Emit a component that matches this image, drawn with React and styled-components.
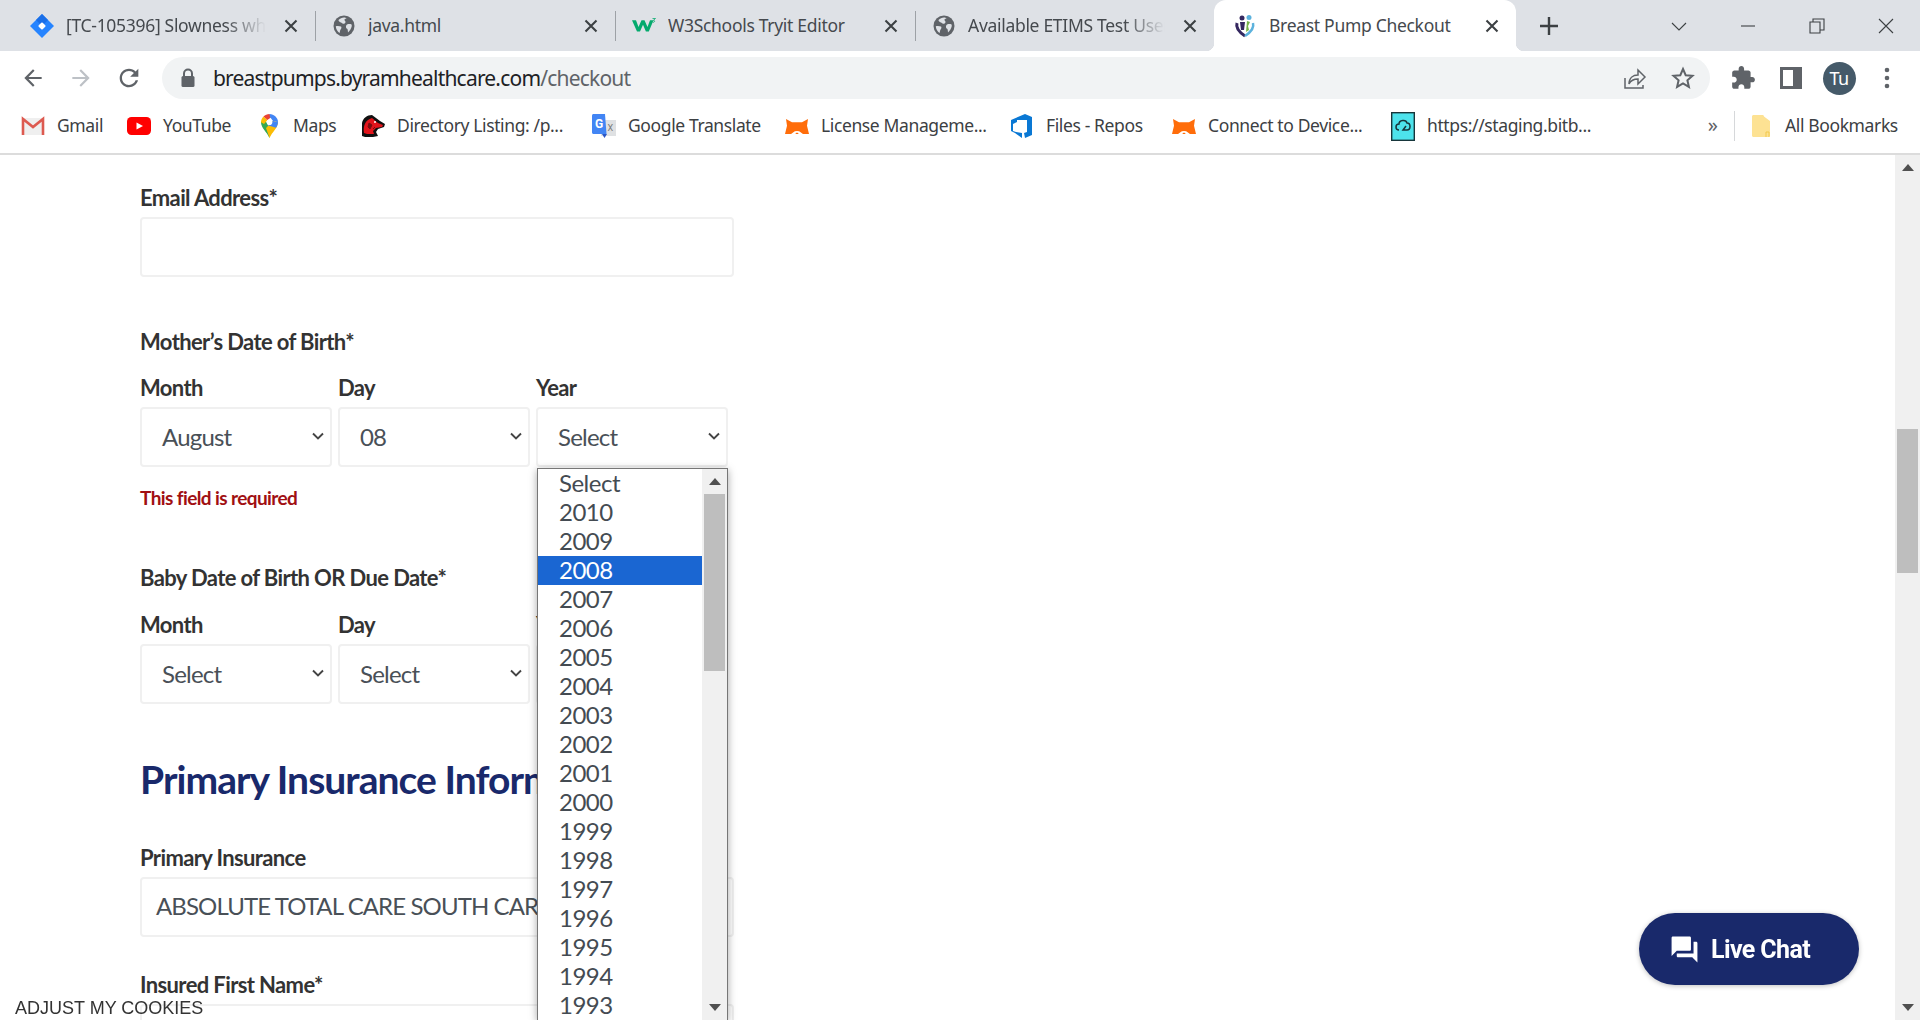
import { Fragment } from "react";
import styled, { createGlobalStyle } from "styled-components";

const GlobalStyle = createGlobalStyle`
  html, body {
    margin: 0;
    padding: 0;
    height: 100%;
    overflow: hidden;
    background: #fff;
  }
  * {
    box-sizing: border-box;
  }
`;

const Page = styled.div`
  width: 1920px;
  height: 1020px;
  display: flex;
  flex-direction: column;
  overflow: hidden;
  position: relative;
  font-family: "Lato", "Noto Sans", sans-serif;
`;

/* ---------- browser chrome ---------- */

const TabStrip = styled.div`
  height: 51px;
  flex: none;
  display: flex;
  align-items: center;
  padding-left: 14px;
  background: #dee1e6;
`;

const Tab = styled.div`
  width: ${(p) => p.$w}px;
  height: ${(p) => (p.$active ? "51px" : "30px")};
  flex: none;
  display: flex;
  align-items: center;
  gap: 12px;
  padding: 0 15px 0 ${(p) => p.$pad || 16}px;
  position: relative;
  background: ${(p) => (p.$active ? "#fff" : "transparent")};
  border-radius: ${(p) => (p.$active ? "12px 12px 0 0" : "0")};
  ${(p) =>
    p.$active &&
    `
    &::before, &::after {
      content: "";
      position: absolute;
      bottom: 0;
      width: 8px;
      height: 8px;
    }
    &::before {
      left: -8px;
      background: radial-gradient(circle at 0 0, #dee1e6 8px, #fff 8.5px);
    }
    &::after {
      right: -8px;
      background: radial-gradient(circle at 100% 0, #dee1e6 8px, #fff 8.5px);
    }
  `}
`;

const TabIcon = styled.span`
  width: 24px;
  height: 24px;
  flex: none;
  display: flex;
  align-items: center;
  justify-content: center;
`;

const TabTitle = styled.span`
  flex: 1;
  min-width: 0;
  overflow: hidden;
  white-space: nowrap;
  padding-bottom: 2px;
  font: 17.5px "Noto Sans", sans-serif;
  letter-spacing: -0.3px;
  color: #45494e;
  ${(p) =>
    p.$fade &&
    `mask-image: linear-gradient(to right, #000 78%, transparent 98%);`}
`;

const TabSep = styled.span`
  width: 1px;
  height: 30px;
  flex: none;
  background: #9da1a6;
`;

const NewTab = styled.span`
  width: 24px;
  height: 24px;
  margin-left: 21px;
  display: flex;
`;

const WindowControls = styled.div`
  margin-left: auto;
  display: flex;
`;

const WindowButton = styled.span`
  width: 69px;
  height: 51px;
  display: flex;
  align-items: center;
  justify-content: center;
`;

const Toolbar = styled.div`
  height: 52px;
  flex: none;
  display: flex;
  align-items: flex-start;
  padding: 6px 9px 4px;
  background: #fff;
`;

const ToolButton = styled.span`
  width: 48px;
  height: 42px;
  flex: none;
  display: flex;
  align-items: center;
  justify-content: center;
`;

const AddressBar = styled.div`
  flex: 1;
  height: 42px;
  margin: 0 9px;
  padding: 0 3px 0 18px;
  display: flex;
  align-items: center;
  border-radius: 21px;
  background: #f1f3f4;
`;

const Url = styled.span`
  margin-left: 17px;
  flex: 1;
  font: 21px "Noto Sans", sans-serif;
  letter-spacing: -0.8px;
  color: #202124;
  span {
    color: #5f6368;
  }
`;

const BookmarkBar = styled.div`
  height: 52px;
  flex: none;
  display: flex;
  align-items: center;
  padding: 0 22px 4px 21px;
  background: #fff;
  border-bottom: 2px solid #dcdcdc;
`;

const Bookmark = styled.div`
  display: flex;
  align-items: center;
  gap: 12px;
  margin-right: 25px;
`;

const BookmarkIcon = styled.span`
  width: 24px;
  height: 24px;
  flex: none;
  display: flex;
  align-items: center;
  justify-content: center;
`;

const BookmarkLabel = styled.span`
  width: ${(p) => p.$w}px;
  margin-left: ${(p) => p.$left || 0}px;
  padding-bottom: 2px;
  white-space: nowrap;
  font: 17.5px "Noto Sans", sans-serif;
  letter-spacing: -0.38px;
  color: #3c4043;
`;

const BookmarkEnd = styled.div`
  margin-left: auto;
  display: flex;
  align-items: center;
`;

const More = styled.span`
  padding-bottom: 4px;
  font: 20px "Noto Sans", sans-serif;
  color: #5f6368;
  margin-right: 16px;
`;

const BarSep = styled.span`
  width: 1px;
  height: 30px;
  background: #d6d8da;
  margin-right: 17px;
`;

/* ---------- page body ---------- */

const Body = styled.div`
  flex: 1;
  min-height: 0;
  display: flex;
`;

const Main = styled.main`
  flex: 1;
  min-width: 0;
  overflow: hidden;
  padding: 31px 0 0 140px;
`;

const Form = styled.div`
  width: 594px;
`;

const Label = styled.div`
  height: 24px;
  line-height: 23px;
  font-size: 22px;
  font-weight: 700;
  letter-spacing: -0.62px;
  white-space: nowrap;
  color: #333;
  margin-top: ${(p) => p.$top || 0}px;
  margin-bottom: 7px;
`;

const Input = styled.div`
  width: 594px;
  height: 60px;
  padding: 0 0 4px 14px;
  display: flex;
  align-items: center;
  background: #fff;
  border: 2px solid #f0f0f0;
  border-radius: 4px;
  font-size: 24px;
  letter-spacing: -0.9px;
  white-space: nowrap;
  overflow: hidden;
  color: #495057;
`;

const DateRow = styled.div`
  width: 588px;
  margin-top: ${(p) => p.$top}px;
  display: grid;
  grid-template-columns: repeat(3, 1fr);
  gap: 6px;
`;

const DateCol = styled.div`
  position: relative;
  min-width: 0;
`;

const SelectBox = styled.div`
  height: 60px;
  padding: 0 6px 2px 20px;
  display: flex;
  align-items: center;
  justify-content: space-between;
  background: #fff;
  border: 2px solid #f0f0f0;
  border-radius: 4px;
  font-size: 24px;
  letter-spacing: -0.8px;
  color: #495057;
`;

const ErrorText = styled.div`
  height: 24px;
  line-height: 22px;
  margin-top: 20px;
  font-size: 19px;
  font-weight: 700;
  letter-spacing: -0.6px;
  color: #a10f12;
`;

const SectionTitle = styled.h2`
  height: 48px;
  line-height: 46px;
  margin: 52px 0 42px;
  font-size: 39px;
  font-weight: 700;
  letter-spacing: -0.95px;
  white-space: nowrap;
  color: #19296b;
`;

/* the open year list, drawn over the form */
const YearPopup = styled.div`
  position: absolute;
  top: 92px;
  left: 1px;
  width: 191px;
  height: 552px;
  z-index: 5;
  display: flex;
  background: #fff;
  border: 1px solid #767676;
  border-bottom: none;
  box-shadow: 0 2px 8px rgba(0, 0, 0, 0.35);
`;

const YearList = styled.div`
  flex: 1;
  min-width: 0;
`;

const YearOption = styled.div`
  height: 29px;
  line-height: 27px;
  padding-left: 21px;
  font-size: 24px;
  letter-spacing: -0.5px;
  color: ${(p) => (p.$selected ? "#fff" : "#444b52")};
  background: ${(p) => (p.$selected ? "#1a66d2" : "transparent")};
`;

const Scrollbar = styled.div`
  width: ${(p) => p.$w}px;
  flex: none;
  display: flex;
  flex-direction: column;
  align-items: center;
  background: #f0f0f0;
`;

const ScrollArrow = styled.span`
  height: 25px;
  flex: none;
  display: flex;
  align-items: center;
  justify-content: center;
  margin-top: ${(p) => (p.$down ? "auto" : "0")};
`;

const ScrollThumb = styled.div`
  width: 21px;
  height: ${(p) => p.$h}px;
  margin-top: ${(p) => p.$top}px;
  background: #bebebe;
`;

const CookieLink = styled.div`
  position: fixed;
  left: 15px;
  bottom: 1px;
  font: 18px "Liberation Sans", Arial, sans-serif;
  line-height: 22px;
  color: #333;
`;

const ChatButton = styled.div`
  position: fixed;
  right: 61px;
  bottom: 35px;
  width: 220px;
  height: 72px;
  padding-left: 30px;
  display: flex;
  align-items: center;
  gap: 11px;
  border-radius: 36px;
  background: #19296b;
  box-shadow: 0 1px 5px rgba(0, 0, 0, 0.25);
  color: #fff;
  font: 700 25px "Roboto", sans-serif;
  letter-spacing: -0.6px;
`;

/* ---------- icons ---------- */

const Chevron = () => (
  <svg width="12" height="8" viewBox="0 0 12 8" fill="none">
    <path d="M1 1.500l5 5 5-5" stroke="#444" strokeWidth="1.900" />
  </svg>
);

const CloseX = () => (
  <svg width="18" height="18" viewBox="0 0 18 18" fill="none">
    <path d="M3.500 3.500l11 11M14.500 3.500l-11 11" stroke="#3c4043" strokeWidth="2.100" />
  </svg>
);

const Globe = () => (
  <svg width="22" height="22" viewBox="0 0 22 22">
    <circle cx="11" cy="11" r="10.500" fill="#5f6368" />
    <path
      d="M11 2.500c-2 .2-4 1-5.500 2.600.2 1.500 1 2 2.400 2.400 1 .3 1.300 1.200 2.300 1.300 1.200.1 2.300-.8 2.300-1.900 0-.8-.9-1-1-1.800-.1-.9.4-1.500 2-1.700C13 2.900 12 2.500 11 2.500zM8 11.500c-1.500-.5-3.400-.8-5.200-.2.1 2.700 1.500 5.200 3.800 6.700.6-1.500.2-2.800 1.200-3.700.8-.8.800-2.400.2-2.800zM18.600 9.500c-1.600-.6-4.100-.7-5.100.5-1 1.300-.6 3.200.6 3.800.8.400.7 2.400.9 3.600 2-1.600 3.300-4 3.800-6.300-.1-.6-.1-1.100-.2-1.600z"
      fill="#dee1e6"
    />
  </svg>
);

const JiraIcon = () => (
  <svg width="24" height="24" viewBox="0 0 24 24">
    <path d="M12 0l12 12-12 12L0 12z" fill="#2684ff" />
    <path d="M12 0l6 6-6 6-6-6z" fill="#1a6fe8" />
    <rect x="9.200" y="9.200" width="5.600" height="5.600" rx="1" transform="rotate(45 12 12)" fill="#fff" />
  </svg>
);

const W3Icon = () => (
  <svg width="24" height="15" viewBox="0 0 24 20" preserveAspectRatio="none">
    <path d="M0 3h4l2.500 9L9.500 3h3l3 9L18 3h3.500l-4.700 15h-2.900L11 9l-3 9H5z" fill="#04aa6d" />
    <path d="M20.500 .5h3L21.500 3c1.500.3 1.500 2.800-.7 2.800" fill="none" stroke="#04aa6d" strokeWidth="1" />
  </svg>
);

const PumpIcon = () => (
  <svg width="24" height="24" viewBox="0 0 24 24">
    <path d="M12 22C6 18 2.500 14 4 9" fill="none" stroke="#34275f" strokeWidth="3" />
    <path d="M12 22c6-4 9.500-8 8-13" fill="none" stroke="#5cb2dd" strokeWidth="2.500" />
    <circle cx="9" cy="4" r="2.500" fill="#34275f" />
    <circle cx="16" cy="3.500" r="2.500" fill="#5cb2dd" />
    <path d="M7 8h5l-1 8H8z" fill="#34275f" />
    <path d="M14 7l3 1-2 4 1 4-3 2z" fill="#77b44a" />
  </svg>
);

const GmailIcon = () => (
  <svg width="24" height="20" viewBox="0 0 24 20">
    <rect x="1" y="2" width="22" height="17" fill="#efefef" />
    <path d="M2 19V3l10 8 10-8v16" fill="none" stroke="#dd5a50" strokeWidth="2.600" />
  </svg>
);

const YouTubeIcon = () => (
  <svg width="24" height="18" viewBox="0 0 24 18">
    <rect width="24" height="18" rx="4.500" fill="#f00" />
    <path d="M9.500 5.500L16 9l-6.500 3.500z" fill="#fff" />
  </svg>
);

const MapsIcon = () => (
  <svg width="17" height="24" viewBox="0 0 17 24">
    <path d="M8.500 24C6 18 0 14 0 8.200L3 4l5.500 9.500z" fill="#34a853" />
    <path d="M0 8.200C0 6 1 4 2.500 2.500l4 3.500L3 10z" fill="#fbbc04" />
    <path d="M2.500 2.500C4 1 6.200 0 8.500 0l2 3-4 3z" fill="#ea4335" />
    <path d="M8.500 0C13 0 17 3.700 17 8.200L12 7 9 3z" fill="#4285f4" />
    <path d="M17 8.200c0 5.800-6 9.800-8.500 15.800L5 14l7-7z" fill="#fbbc04" />
    <path d="M17 8.200c0 2-.8 3.800-2 5.500L6 11l6-4z" fill="#4285f4" />
    <circle cx="8.500" cy="8.200" r="2.800" fill="#fff" />
  </svg>
);

const MascotIcon = () => (
  <svg width="24" height="24" viewBox="0 0 24 24">
    <path d="M1 22V9c1-5 5-8 10-8l4 3 4 3 5 3-1 3-6 2-2 3 2 4-5 1H4z" fill="#111" />
    <path d="M3 19c-1-7 1-13 8-15l6 5 5 2-1 2-6 1-3 3 1 3H6z" fill="#e2141b" />
    <path d="M8 9l3 2-2 4-2-2zM12 15l2-2" fill="#7a0c10" stroke="#7a0c10" />
    <circle cx="14" cy="8" r="1" fill="#fff" />
  </svg>
);

const TranslateIcon = () => (
  <svg width="24" height="24" viewBox="0 0 24 24">
    <rect x="9" y="6" width="15" height="16" fill="#dfe1e3" />
    <path d="M0 1.500C0 .7.700 0 1.500 0H13l1.500 20H1.500C.7 20 0 19.300 0 18.500z" fill="#4285f4" />
    <path d="M10 20h5l-2.500 4z" fill="#2a56c6" />
    <text x="3" y="14" fontFamily="Roboto, sans-serif" fontSize="12" fontWeight="700" fill="#fff">G</text>
    <text x="15.500" y="17" fontFamily="Roboto, sans-serif" fontSize="9" fill="#777">X</text>
  </svg>
);

const FoxIcon = () => (
  <svg width="24" height="15" viewBox="0 0 24 18" preserveAspectRatio="none">
    <path d="M1 0l6 4h10l6-4-1 8 2 10h-6l-3.500-3h-5L6 18H0l2-10z" fill="#ff6d0a" />
    <path d="M8.500 18c0-5 7-5 7 0z" fill="#fff" />
    <path d="M10.500 18c0-2 3-2 3 0z" fill="#ff6d0a" />
  </svg>
);

const ReposIcon = () => (
  <svg width="24" height="24" viewBox="0 0 24 24">
    <path d="M15 0l7 3v18l-7 3-1-5 3-1V6H7v2L3 10v7l3 1 6 1v5l-7-5-4-2V6z" fill="#0a78d4" />
  </svg>
);

const CloudIcon = () => (
  <svg width="24" height="29" viewBox="0 0 24 29">
    <rect x=".7" y=".7" width="22.600" height="27.600" fill="#4de3ec" stroke="#17363b" strokeWidth="1.400" />
    <path d="M8 18c-4 0-4-6 0-6 0-4 7-5 8-1 4 0 4 7 0 7h-4l3-4" fill="none" stroke="#17363b" strokeWidth="1.500" />
  </svg>
);

const FolderIcon = () => (
  <svg width="18" height="22" viewBox="0 0 18 22">
    <path d="M0 1.500C0 .7.700 0 1.500 0h9c.8 0 1.500.7 1.500 1.500L18 6v14.500c0 .8-.7 1.500-1.500 1.500h-15C.7 22 0 21.300 0 20.500z" fill="#fde293" />
    <path d="M14 22v-5h3v5" fill="none" stroke="#f2c94c" strokeWidth="1" />
  </svg>
);

const MaterialIcon = ({ d, size = 24, color = "#5f6368" }) => (
  <svg width={size} height={size} viewBox="0 0 24 24">
    <path d={d} fill={color} />
  </svg>
);

const BACK = "M20 11H7.830l5.590-5.590L12 4l-8 8 8 8 1.410-1.410L7.830 13H20v-2z";
const FORWARD = "M4 11h12.170l-5.590-5.590L12 4l8 8-8 8-1.410-1.410L16.170 13H4v-2z";
const RELOAD =
  "M17.650 6.350C16.200 4.900 14.210 4 12 4c-4.420 0-7.990 3.580-7.990 8s3.570 8 7.990 8c3.730 0 6.840-2.550 7.730-6h-2.080c-.82 2.330-3.040 4-5.650 4-3.310 0-6-2.690-6-6s2.690-6 6-6c1.660 0 3.140.69 4.220 1.780L13 11h7V4l-2.350 2.350z";
const PUZZLE =
  "M20.500 11H19V7c0-1.100-.9-2-2-2h-4V3.500C13 2.120 11.880 1 10.500 1S8 2.120 8 3.500V5H4c-1.100 0-1.990.9-1.990 2v3.800H3.500c1.490 0 2.700 1.210 2.700 2.700s-1.210 2.700-2.700 2.700H2V20c0 1.100.9 2 2 2h3.800v-1.500c0-1.490 1.210-2.700 2.700-2.700 1.490 0 2.700 1.210 2.700 2.700V22H17c1.100 0 2-.9 2-2v-4h1.500c1.380 0 2.500-1.120 2.500-2.500S21.880 11 20.500 11z";
const CHAT =
  "M21 6h-2v9H6v2c0 .55.45 1 1 1h11l4 4V7c0-.55-.45-1-1-1zm-4 6V3c0-.55-.45-1-1-1H3c-.55 0-1 .45-1 1v14l4-4h10c.55 0 1-.45 1-1z";

const LockIcon = () => (
  <svg width="16" height="20" viewBox="0 0 16 20">
    <path d="M4 9V5.500a4 4 0 018 0V9" fill="none" stroke="#5f6368" strokeWidth="2" />
    <rect x="1.500" y="8" width="13" height="11" rx="1.500" fill="#5f6368" />
  </svg>
);

const ShareIcon = () => (
  <svg width="24" height="24" viewBox="0 0 24 24" fill="none" stroke="#5f6368" strokeWidth="1.500">
    <path d="M2 12v10h18v-3" />
    <path d="M6 18c0-6 4-9 9-9V4l7 7-7 7v-5c-4 0-7 1-9 5z" />
  </svg>
);

const StarIcon = () => (
  <svg width="24" height="24" viewBox="0 0 24 24" fill="none" stroke="#5f6368" strokeWidth="2">
    <path d="M12 3l2.700 6.200 6.800.6-5.100 4.500 1.500 6.600L12 17.400l-5.900 3.500 1.500-6.600-5.100-4.500 6.800-.6z" />
  </svg>
);

const PanelIcon = () => (
  <svg width="22" height="22" viewBox="0 0 22 22">
    <path d="M0 0h22v22H0z" fill="#5f6368" />
    <path d="M3 3h10v16H3z" fill="#fff" />
  </svg>
);

const Avatar = styled.span`
  width: 33px;
  height: 33px;
  border-radius: 50%;
  display: flex;
  align-items: center;
  justify-content: center;
  background: #455a69;
  color: #fff;
  font: 18px "Noto Sans", sans-serif;
  letter-spacing: -0.5px;
`;

const MenuDots = () => (
  <svg width="6" height="22" viewBox="0 0 6 22">
    <circle cx="3" cy="3" r="2.300" fill="#5f6368" />
    <circle cx="3" cy="11" r="2.300" fill="#5f6368" />
    <circle cx="3" cy="19" r="2.300" fill="#5f6368" />
  </svg>
);

const Arrow = ({ down }) => (
  <svg width="12" height="7" viewBox="0 0 12 7">
    <path d={down ? "M0 0h12L6 7z" : "M6 0l6 7H0z"} fill="#505050" />
  </svg>
);

const WinIcon = ({ children }) => (
  <svg width="20" height="20" viewBox="0 0 20 20" fill="none" stroke="#3c4043" strokeWidth="1.100">
    {children}
  </svg>
);

/* ---------- data ---------- */

const tabs = [
  { title: "[TC-105396] Slowness when", icon: <JiraIcon />, w: 301, fade: true, sep: true },
  { title: "java.html", icon: <Globe />, w: 299, sep: true },
  { title: "W3Schools Tryit Editor", icon: <W3Icon />, w: 299, sep: true },
  { title: "Available ETIMS Test Users", icon: <Globe />, w: 298, fade: true },
];

const bookmarks = [
  { label: "Gmail", w: 45, icon: <GmailIcon /> },
  { label: "YouTube", w: 69, icon: <YouTubeIcon /> },
  { label: "Maps", w: 43, icon: <MapsIcon /> },
  { label: "Directory Listing: /p...", w: 170, icon: <MascotIcon /> },
  { label: "Google Translate", w: 132, icon: <TranslateIcon /> },
  { label: "License Manageme...", w: 164, icon: <FoxIcon /> },
  { label: "Files - Repos", w: 101, icon: <ReposIcon /> },
  { label: "Connect to Device...", w: 158, icon: <FoxIcon /> },
  { label: "https://staging.bitb...", w: 165, icon: <CloudIcon /> },
];

const years = ["Select"];
for (let y = 2010; y >= 1993; y--) {
  years.push(String(y));
}

const DateField = ({ label, value, children }) => (
  <DateCol>
    <Label>{label}</Label>
    <SelectBox>
      {value}
      <Chevron />
    </SelectBox>
    {children}
  </DateCol>
);

const App = () => {
  return (
    <Page>
      <GlobalStyle />
      <TabStrip>
        {tabs.map((t) => (
          <Fragment key={t.title}>
            <Tab $w={t.w}>
              <TabIcon>{t.icon}</TabIcon>
              <TabTitle $fade={t.fade}>{t.title}</TabTitle>
              <CloseX />
            </Tab>
            {t.sep && <TabSep />}
          </Fragment>
        ))}
        <Tab $w={302} $pad={19} $active>
          <TabIcon>
            <PumpIcon />
          </TabIcon>
          <TabTitle>Breast Pump Checkout</TabTitle>
          <CloseX />
        </Tab>
        <NewTab>
          <svg width="24" height="24" viewBox="0 0 24 24">
            <path d="M12 3v18M3 12h18" stroke="#3c4043" strokeWidth="2.400" />
          </svg>
        </NewTab>
        <WindowControls>
          <WindowButton>
            <WinIcon>
              <path d="M3 7l7 7 7-7" />
            </WinIcon>
          </WindowButton>
          <WindowButton>
            <WinIcon>
              <path d="M3 10h14" />
            </WinIcon>
          </WindowButton>
          <WindowButton>
            <WinIcon>
              <path d="M3 6h10v11H3z" />
              <path d="M6 6V3h11v11h-4" />
            </WinIcon>
          </WindowButton>
          <WindowButton>
            <WinIcon>
              <path d="M3 3l14 14M17 3L3 17" />
            </WinIcon>
          </WindowButton>
        </WindowControls>
      </TabStrip>

      <Toolbar>
        <ToolButton>
          <MaterialIcon d={BACK} size={26} />
        </ToolButton>
        <ToolButton>
          <MaterialIcon d={FORWARD} size={26} color="#bdc1c6" />
        </ToolButton>
        <ToolButton>
          <MaterialIcon d={RELOAD} size={28} />
        </ToolButton>
        <AddressBar>
          <LockIcon />
          <Url>
            breastpumps.byramhealthcare.com<span>/checkout</span>
          </Url>
          <ToolButton>
            <ShareIcon />
          </ToolButton>
          <ToolButton>
            <StarIcon />
          </ToolButton>
        </AddressBar>
        <ToolButton>
          <MaterialIcon d={PUZZLE} size={26} />
        </ToolButton>
        <ToolButton>
          <PanelIcon />
        </ToolButton>
        <ToolButton>
          <Avatar>Tu</Avatar>
        </ToolButton>
        <ToolButton>
          <MenuDots />
        </ToolButton>
      </Toolbar>

      <BookmarkBar>
        {bookmarks.map((b) => (
          <Bookmark key={b.label}>
            <BookmarkIcon>{b.icon}</BookmarkIcon>
            <BookmarkLabel $w={b.w}>{b.label}</BookmarkLabel>
          </Bookmark>
        ))}
        <BookmarkEnd>
          <More>»</More>
          <BarSep />
          <FolderIcon />
          <BookmarkLabel $w={113} $left={15}>
            All Bookmarks
          </BookmarkLabel>
        </BookmarkEnd>
      </BookmarkBar>

      <Body>
        <Main>
          <Form>
            <Label>Email Address*</Label>
            <Input />

            <Label $top={53}>Mother’s Date of Birth*</Label>
            <DateRow $top={22}>
              <DateField label="Month" value="August" />
              <DateField label="Day" value="08" />
              <DateField label="Year" value="Select">
                <YearPopup>
                  <YearList>
                    {years.map((y) => (
                      <YearOption key={y} $selected={y === "2008"}>
                        {y}
                      </YearOption>
                    ))}
                  </YearList>
                  <Scrollbar $w={25}>
                    <ScrollArrow>
                      <Arrow />
                    </ScrollArrow>
                    <ScrollThumb $h={177} $top={0} />
                    <ScrollArrow $down>
                      <Arrow down />
                    </ScrollArrow>
                  </Scrollbar>
                </YearPopup>
              </DateField>
            </DateRow>
            <ErrorText>This field is required</ErrorText>

            <Label $top={55}>Baby Date of Birth OR Due Date*</Label>
            <DateRow $top={23}>
              <DateField label="Month" value="Select" />
              <DateField label="Day" value="Select" />
              <DateField label="Year" value="Select" />
            </DateRow>

            <SectionTitle>Primary Insurance Information</SectionTitle>

            <Label>Primary Insurance</Label>
            <Input>ABSOLUTE TOTAL CARE SOUTH CAROLINA</Input>

            <Label $top={36}>Insured First Name*</Label>
            <Input />
          </Form>
        </Main>
        <Scrollbar $w={25}>
          <ScrollArrow>
            <Arrow />
          </ScrollArrow>
          <ScrollThumb $h={144} $top={249} />
          <ScrollArrow $down>
            <Arrow down />
          </ScrollArrow>
        </Scrollbar>
      </Body>

      <CookieLink>ADJUST MY COOKIES</CookieLink>
      <ChatButton>
        <MaterialIcon d={CHAT} size={31} color="#fff" />
        Live Chat
      </ChatButton>
    </Page>
  );
};

export default App;
